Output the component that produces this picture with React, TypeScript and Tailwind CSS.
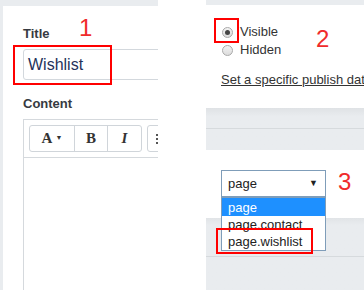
import React from 'react';

const Mark: React.FC<{ n: string; className: string }> = ({ n, className }) => (
  <span className={`absolute text-[24px] leading-none text-[#f02b2b] ${className}`}>{n}</span>
);

const Box: React.FC<{ className: string }> = ({ className }) => (
  <div className={`absolute border-2 border-[#f00] ${className}`} />
);

const Radio: React.FC<{ checked?: boolean; label: string }> = ({ checked, label }) => (
  <label className="flex items-center gap-[7px] h-[18px] text-[13px] text-[#333]">
    <span className="w-[11px] h-[11px] rounded-full border border-[#a9a9a9] bg-gradient-to-b from-[#f3f3f3] to-[#dcdcdc] flex items-center justify-center">
      {checked && <span className="w-[5px] h-[5px] rounded-full bg-[#444]" />}
    </span>
    {label}
  </label>
);

const LeftPanel: React.FC = () => (
  <div className="w-[158px] h-full shrink-0 bg-[#e9ecef] pt-[6px] pl-[3px] overflow-hidden">
    <div className="bg-white h-full w-[220px] pl-[20px] pt-[19px]">
      <div className="text-[13px] font-semibold leading-[18px] text-[#363a41]">Title</div>
      <div className="mt-[6px] h-[31px] border border-[#d3d8dd] rounded-[3px] pl-[4px] flex items-center text-[16px] text-[#25325a]">
        Wishlist
      </div>
      <div className="mt-[15px] text-[13px] font-semibold leading-[18px] text-[#363a41]">Content</div>
      <div className="mt-[6px] h-[200px] border-l border-t border-[#d5d9dd]">
        <div className="flex gap-[5px] p-[5px] border-b border-[#d5d9dd]">
          <div className="flex h-[27px] border border-[#d0d5da] rounded-[3px] font-['Liberation_Serif',serif] font-bold text-[15px] text-[#333]">
            <div className="w-[45px] flex items-center justify-center gap-[3px] border-r border-[#d0d5da]">
              A<span className="text-[7px]">▼</span>
            </div>
            <div className="w-[33px] flex items-center justify-center border-r border-[#d0d5da]">B</div>
            <div className="w-[33px] flex items-center justify-center italic">I</div>
          </div>
          <div className="flex h-[27px] w-[40px] border border-[#d0d5da] rounded-[3px] pl-[8px] items-center">
            <span className="flex flex-col gap-[2px]">
              <span className="w-[2px] h-[2px] bg-[#555]" />
              <span className="w-[2px] h-[2px] bg-[#555]" />
              <span className="w-[2px] h-[2px] bg-[#555]" />
            </span>
          </div>
        </div>
      </div>
    </div>
  </div>
);

const RightPanel: React.FC = () => (
  <div className="flex-1 h-full bg-[#e9ecef] pt-[5px] flex flex-col">
    <div className="h-[103px] bg-white pl-[16px] pt-[18px]">
      <Radio checked label="Visible" />
      <Radio label="Hidden" />
      <a className="block mt-[11px] -ml-[1px] text-[13px] text-[#333] underline whitespace-nowrap">
        Set a specific publish date
      </a>
    </div>
    <div className="h-[42px] bg-gradient-to-b from-[#dfe2e5] via-[#e9ecef] to-[#e9ecef] via-[20%]">
      <div className="h-[21px] border-b border-[#d6dadd]" />
    </div>
    <div className="h-[68px] bg-white pl-[15px] pt-[20px] relative">
      <div className="w-[105px] h-[27px] border border-[#7f9db9] flex items-center justify-between pl-[6px] pr-[7px] text-[13px] text-[#222]">
        page<span className="text-[9px]">▼</span>
      </div>
      <div className="absolute left-[15px] top-[47px] w-[105px] border border-[#7f9db9] bg-white z-10 text-[13px] leading-[17px]">
        <div className="bg-[#1e90ff] text-white pl-[6px] pt-[1px]">page</div>
        <div className="pl-[6px] text-[#222]">page.contact</div>
        <div className="pl-[6px] text-[#222]">page.wishlist</div>
      </div>
    </div>
    <div className="flex-1 bg-gradient-to-b from-[#e1e4e7] via-[#e9ecef] to-[#e9ecef] via-[10%]">
      <div className="h-[39px] border-b border-[#d6dadd]" />
    </div>
  </div>
);

export default function App() {
  return (
    <div className="relative flex w-[364px] h-[290px] overflow-hidden bg-white font-['Liberation_Sans',Arial,sans-serif]">
      <LeftPanel />
      <div className="w-[48px] shrink-0" />
      <RightPanel />
      <Box className="left-[13px] top-[45px] w-[99px] h-[40px]" />
      <Box className="left-[214px] top-[18px] w-[25px] h-[25px]" />
      <Box className="left-[216px] top-[228px] w-[97px] h-[26px] z-20" />
      <Mark n="1" className="left-[79px] top-[16px]" />
      <Mark n="2" className="left-[316px] top-[27px]" />
      <Mark n="3" className="left-[338px] top-[170px]" />
    </div>
  );
}
